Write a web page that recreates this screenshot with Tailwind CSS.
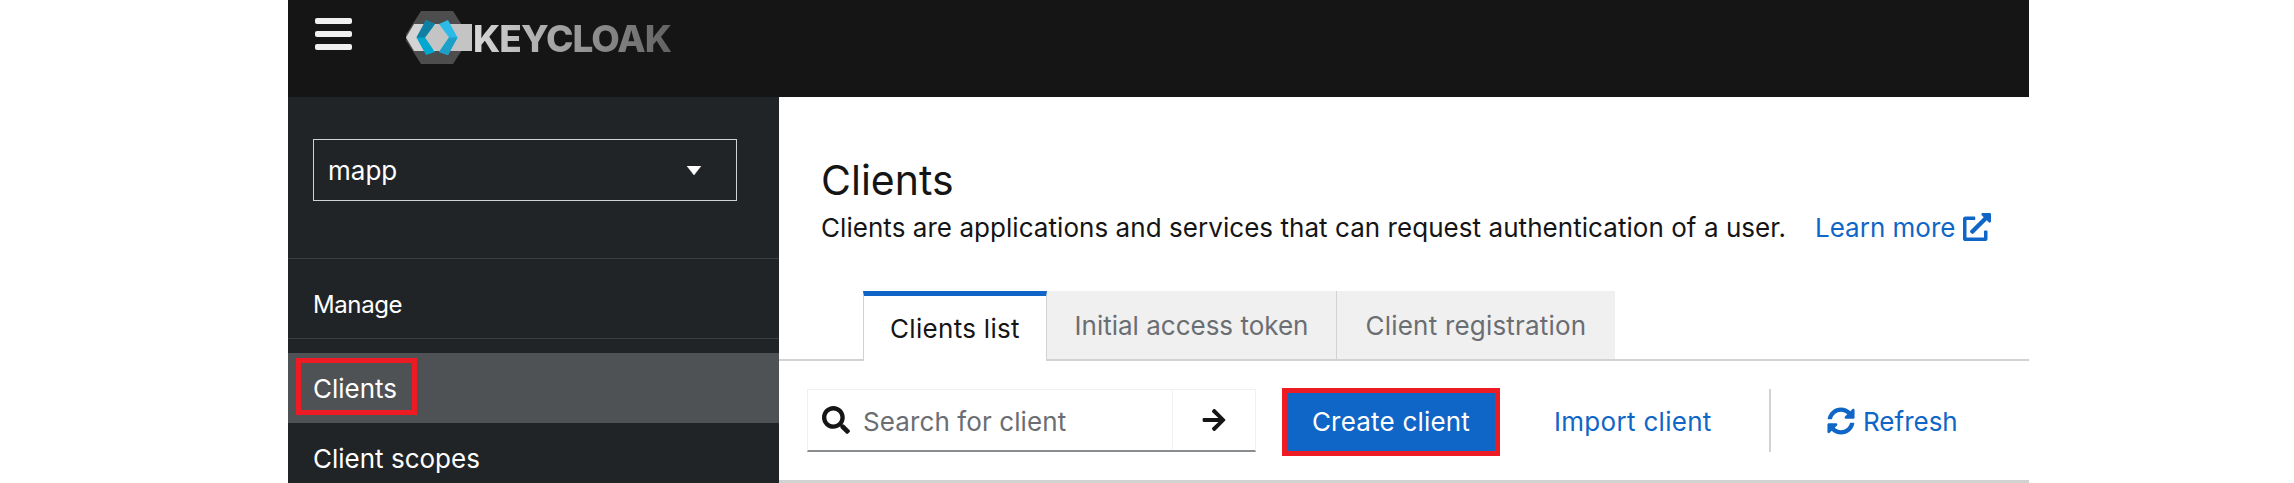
<!DOCTYPE html>
<html lang="en">
<head>
<meta charset="utf-8">
<script src="https://cdn.jsdelivr.net/npm/@tailwindcss/browser@4"></script>
<title>Keycloak Clients</title>
</head>
<body class="bg-white">
<div class="w-[2294px] h-[483px] overflow-hidden pl-[288px] pr-[265px] font-['Inter',sans-serif] text-[26px] leading-[32px] text-[#151515]">
  <header class="h-[97px] bg-[#151515] flex items-start">
    <div class="w-[37px] ml-[27px] mt-[18px] flex flex-col gap-[7px]">
      <span class="h-[6px] rounded-[2px] bg-[#f0f0f0]"></span>
      <span class="h-[6px] rounded-[2px] bg-[#f0f0f0]"></span>
      <span class="h-[6px] rounded-[2px] bg-[#f0f0f0]"></span>
    </div>
    <div class="ml-[54px] mt-[11px] flex items-start">
      <svg width="66" height="53" viewBox="406 11 66 53" class="shrink-0">
        <polygon points="421,11 453,11 470,37.5 453,64 421,64 404,37.5" fill="#4d4d4d"/>
        <polygon points="414,24 472,24 472,51 414,51 406,37.5" fill="#d4d4d4"/>
        <polygon points="417,37.5 437,24 472,24 472,51 437,51" fill="#c4c4c4"/>
        <polygon points="426,20 435,24 425,37.5 435,52 426,55 416.5,37.5" fill="#00a7cf"/>
        <polygon points="426,20 435,24 425,37.5 416.5,37.5" fill="#0f7fa3"/>
        <polygon points="448,20 439,24 449,37.5 439,52 448,55 457.5,37.5" fill="#2bbbe6"/>
        <polygon points="439,52 449,37.5 457.5,37.5 448,55" fill="#1c9fc8"/>
      </svg>
      <span class="ml-px mt-[8px] text-[37px] leading-[40px] font-extrabold tracking-[-1px] bg-gradient-to-r from-[#d8d8d8] to-[#626262] bg-clip-text text-transparent">KEYCLOAK</span>
    </div>
  </header>
  <div class="flex h-[386px]">
    <aside class="w-[491px] shrink-0 bg-[#212427] text-white">
      <div class="h-[162px] pt-[42px] pl-[25px] border-b border-[#3c3f42]">
        <div class="w-[424px] h-[62px] border border-[#d2d2d2] flex items-center justify-between pl-[14px] pr-[34px]">
          <span class="pt-[2px]">mapp</span>
          <svg width="16" height="9" viewBox="0 0 16 9"><polygon points="1,0 15,0 8,9" fill="#fff" stroke="#fff" stroke-width="0.5"/></svg>
        </div>
      </div>
      <div class="h-[80px] border-b border-[#3c3f42] pl-[25px] pt-[30px] text-[24px] tracking-[-0.4px]">Manage</div>
      <div class="mt-[14px] h-[70px] bg-[#4f5255] flex items-center relative pl-[25px]">
        <span class="pt-[1px]">Clients</span>
        <span class="absolute left-[8px] top-[5px] w-[121px] h-[57px] border-[5px] border-[#ed1c24]"></span>
      </div>
      <div class="h-[70px] pl-[25px] pt-[1px] flex items-center">Client scopes</div>
    </aside>
    <main class="flex-1 bg-white">
      <div class="pl-[42px] h-[194px]">
        <h1 class="pt-[59px] text-[41px] leading-[48px]">Clients</h1>
        <div class="flex items-center h-[38px] mt-[5px]">
          <span class="w-[962px] whitespace-nowrap tracking-[0.05px]">Clients are applications and services that can request authentication of a user.</span>
          <span class="ml-[32px] w-[141px] whitespace-nowrap text-[#0f66c7]">Learn more</span>
          <svg class="ml-[7px] -mt-[2px]" width="28" height="28" viewBox="0 0 512 512" fill="#0f66c7"><path d="M432,320H400a16,16,0,0,0-16,16V448H64V128H208a16,16,0,0,0,16-16V80a16,16,0,0,0-16-16H48A48,48,0,0,0,0,112V464a48,48,0,0,0,48,48H400a48,48,0,0,0,48-48V336A16,16,0,0,0,432,320ZM488,0h-128c-21.37,0-32.05,25.91-17,41l35.73,35.73L135,320.37a24,24,0,0,0,0,34L157.67,377a24,24,0,0,0,34,0L435.28,133.32,471,169c15,15,41,4.5,41-17V24A24,24,0,0,0,488,0Z"/></svg>
        </div>
      </div>
      <div class="h-[70px] border-b-2 border-[#d2d2d2] pl-[84px] flex items-stretch">
        <div class="w-[184px] h-[70px] border-t-[5px] border-t-[#0f66c7] border-x border-x-[#d2d2d2] bg-white flex items-center justify-center tracking-[0.3px]">Clients list</div>
        <div class="w-[290px] h-[68px] pt-[2px] bg-[#f0f0f0] border-r border-[#d2d2d2] flex items-center justify-center text-[#6a6e73]">Initial access token</div>
        <div class="w-[278px] h-[68px] pt-[2px] bg-[#f0f0f0] flex items-center justify-center text-[#6a6e73] tracking-[0.2px]">Client registration</div>
      </div>
      <div class="h-[122px] border-b-[3px] border-[#d2d2d2] pl-[28px] pt-[28px] flex items-start">
        <div class="w-[449px] h-[63px] flex border border-[#f0f0f0] border-b-2 border-b-[#8a8d90]">
          <div class="w-[365px] flex items-center pl-[14px] border-r border-[#f0f0f0]">
            <svg width="28" height="28" viewBox="0 0 512 512" fill="#151515"><path d="M505 442.7L405.3 343c-4.5-4.5-10.6-7-17-7H372c27.6-35.3 44-79.7 44-128C416 93.1 322.9 0 208 0S0 93.1 0 208s93.1 208 208 208c48.3 0 92.7-16.4 128-44v16.3c0 6.4 2.5 12.5 7 17l99.7 99.7c9.4 9.4 24.6 9.4 33.9 0l28.3-28.3c9.4-9.4 9.4-24.6.1-34zM208 336c-70.7 0-128-57.2-128-128 0-70.7 57.2-128 128-128 70.7 0 128 57.2 128 128 0 70.7-57.2 128-128 128z"/></svg>
            <span class="ml-[13px] pt-[3px] tracking-[0.1px] text-[#6a6e73]">Search for client</span>
          </div>
          <div class="flex-1 flex items-center justify-center">
            <svg width="24" height="26" viewBox="0 0 448 512" fill="#151515"><path d="M190.5 66.9l22.2-22.2c9.4-9.4 24.6-9.4 33.9 0L441 239c9.4 9.4 9.4 24.6 0 33.9L246.6 467.3c-9.4 9.4-24.6 9.4-33.9 0l-22.2-22.2c-9.5-9.5-9.3-25 .4-34.3L311.4 296H24c-13.3 0-24-10.7-24-24v-32c0-13.3 10.7-24 24-24h287.4L190.9 101.2c-9.8-9.3-10-24.8-.4-34.3z"/></svg>
          </div>
        </div>
        <div class="ml-[26px] -mt-[1px] w-[218px] h-[68px] border-[5px] border-[#ed1c24] bg-[#0f66c7] text-white flex items-center justify-center tracking-[0.2px]">Create client</div>
        <div class="ml-[54px] w-[158px] whitespace-nowrap h-[66px] flex items-center text-[#0f66c7] tracking-[0.3px]">Import client</div>
        <div class="ml-[57px] w-[2px] h-[63px] bg-[#d2d2d2]"></div>
        <div class="ml-[56px] h-[64px] flex items-center text-[#0f66c7]">
          <svg width="28" height="28" viewBox="0 0 512 512" fill="#0f66c7"><path d="M370.72 133.28C339.458 104.008 298.888 87.962 255.848 88c-77.458.068-144.328 53.178-162.791 126.85-1.344 5.363-6.122 9.15-11.651 9.15H24.103c-7.498 0-13.194-6.807-11.807-14.176C33.933 94.924 134.813 8 256 8c66.448 0 126.791 26.136 171.315 68.685L463.03 40.97C478.149 25.851 504 36.559 504 57.941V192c0 13.255-10.745 24-24 24H345.941c-21.382 0-32.09-25.851-16.971-40.971l41.75-41.749zM32 296h134.059c21.382 0 32.09 25.851 16.971 40.971l-41.75 41.75c31.262 29.273 71.835 45.319 114.876 45.28 77.418-.07 144.315-53.144 162.787-126.849 1.344-5.363 6.122-9.15 11.651-9.15h57.304c7.498 0 13.194 6.807 11.807 14.176C478.067 417.076 377.187 504 256 504c-66.448 0-126.791-26.136-171.315-68.685L48.97 471.03C33.851 486.149 8 475.441 8 454.059V320c0-13.255 10.745-24 24-24z"/></svg>
          <span class="ml-[8px] pt-[2px]">Refresh</span>
        </div>
      </div>
    </main>
  </div>
</div>
</body>
</html>
